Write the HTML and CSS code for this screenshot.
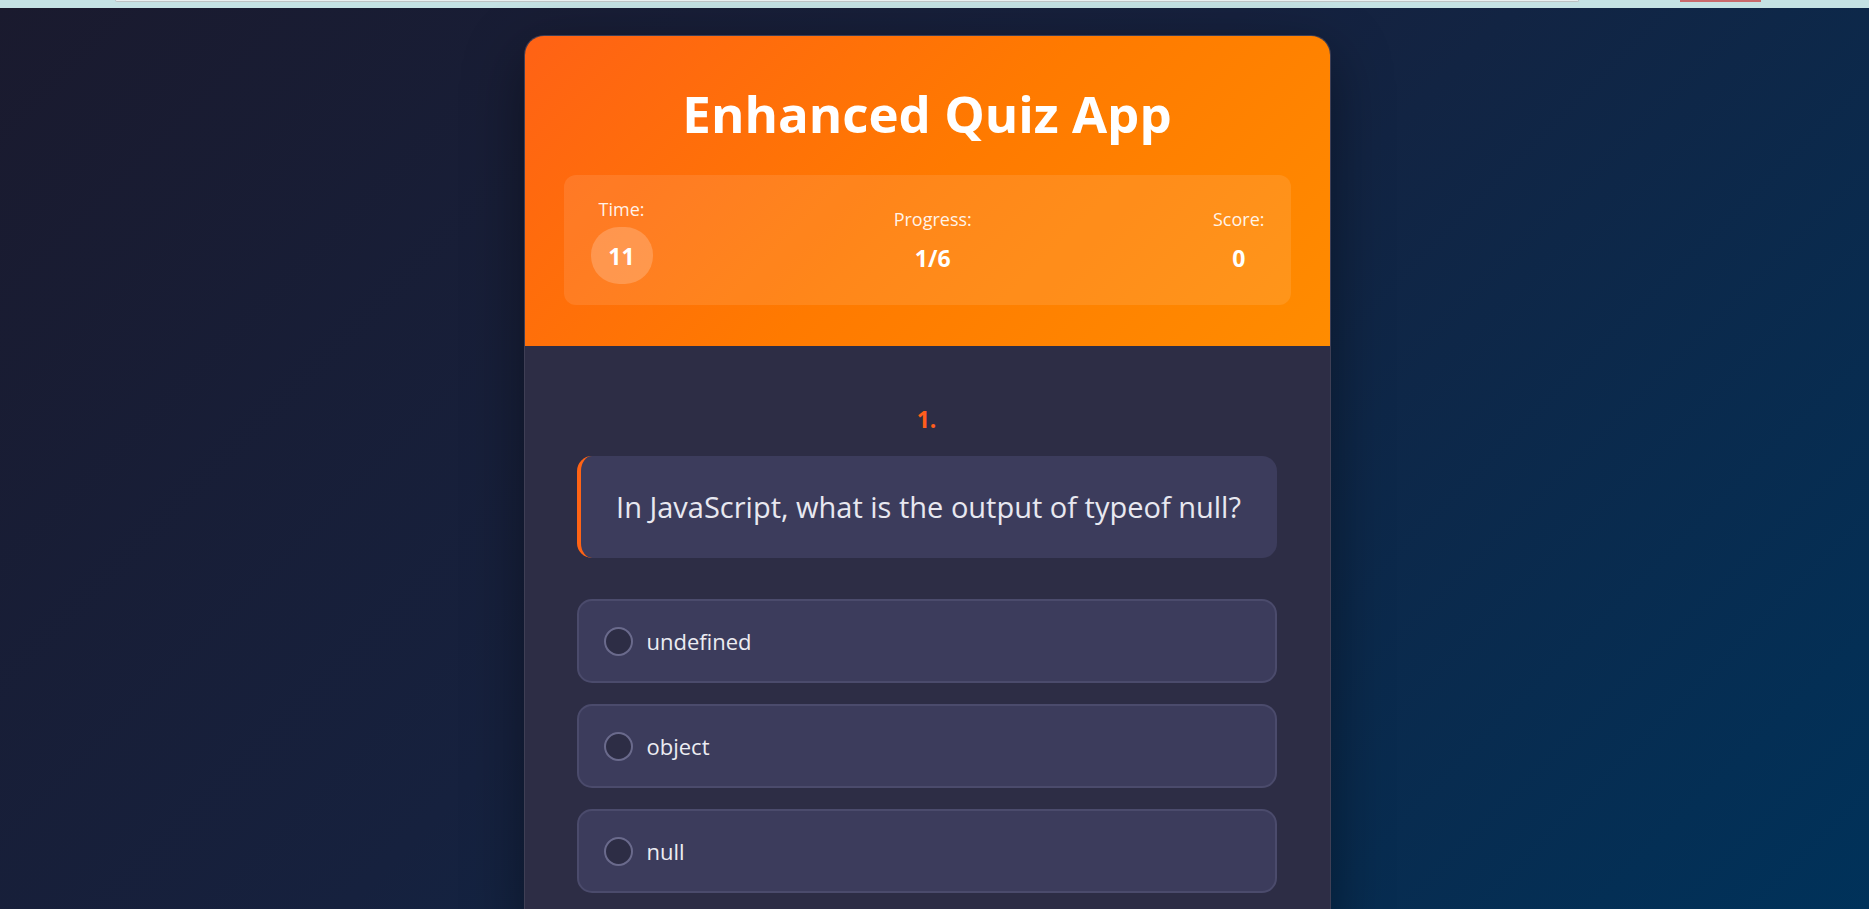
FILE: index.html
```html
<!DOCTYPE html>
<html lang="en">
<head>
<meta charset="utf-8">
<title>Enhanced Quiz App</title>
<link rel="stylesheet" href="styles.css">
</head>
<body>
<div class="topbar">
  <div class="topbar-field"></div>
  <div class="topbar-btn"></div>
</div>
<main class="page">
  <section class="quiz-card">
    <header class="quiz-header">
      <h1 class="quiz-title">Enhanced Quiz App</h1>
      <div class="stats">
        <div class="stat stat-time">
          <span class="stat-label">Time:</span>
          <span class="timer">11</span>
        </div>
        <div class="stat">
          <span class="stat-label">Progress:</span>
          <span class="stat-value">1/6</span>
        </div>
        <div class="stat">
          <span class="stat-label">Score:</span>
          <span class="stat-value">0</span>
        </div>
      </div>
    </header>
    <div class="quiz-body">
      <div class="q-number">1.</div>
      <div class="q-text">In JavaScript, what is the output of typeof null?</div>
      <ul class="options">
        <li class="option"><span class="radio"></span><span class="option-label">undefined</span></li>
        <li class="option"><span class="radio"></span><span class="option-label">object</span></li>
        <li class="option"><span class="radio"></span><span class="option-label">null</span></li>
      </ul>
    </div>
  </section>
</main>
</body>
</html>
```
FILE: styles.css
```css
html, body {
  height: 100%;
}
body {
  margin: 0;
  overflow: hidden;
  font-family: "Open Sans", "Noto Sans", "Liberation Sans", sans-serif;
  background: linear-gradient(135deg, #1a1a2e 0%, #16213e 45%, #00325a 100%);
  color: #fff;
}
.topbar {
  height: 8px;
  background: #c4e2e4;
  display: flex;
  align-items: flex-start;
  padding: 0 108px 0 115px;
  gap: 101px;
}
.topbar-field {
  flex: 1;
  height: 1px;
  background: #e9eff0;
  border: 1px solid #bdc3c4;
  border-top: none;
  border-radius: 0 0 4px 4px;
}
.topbar-btn {
  width: 81px;
  height: 2px;
  background: #c96a6c;
}
.page {
  padding: 27px 15px 0 0;
}
.quiz-card {
  width: 807px;
  box-sizing: border-box;
  margin: 0 auto;
  background: #2d2d45;
  border: 1px solid rgba(255, 255, 255, 0.09);
  border-radius: 20px;
  overflow: hidden;
  box-shadow: 0 18px 60px rgba(0, 0, 0, 0.4);
}
.quiz-header {
  background: linear-gradient(135deg, #ff6215 0%, #ff7a00 50%, #ff8c00 100%);
  padding: 45px 39px 41px;
}
.quiz-title {
  margin: 0 0 30px;
  text-align: center;
  font-size: 51px;
  line-height: 64px;
  font-weight: 700;
}
.stats {
  display: flex;
  justify-content: space-between;
  align-items: center;
  padding: 21px 26px 21px 27px;
  background: rgba(255, 255, 255, 0.1);
  border-radius: 12px;
}
.stat {
  display: flex;
  flex-direction: column;
  align-items: center;
}
.stat-label {
  font-size: 18px;
  line-height: 26px;
  color: rgba(255, 255, 255, 0.92);
  margin-bottom: 10px;
}
.stat-time .stat-label {
  margin-bottom: 5px;
}
.stat-value {
  font-size: 23px;
  line-height: 32px;
  font-weight: 700;
}
.timer {
  width: 62px;
  height: 57px;
  border-radius: 28px;
  background: rgba(255, 255, 255, 0.2);
  display: flex;
  align-items: center;
  justify-content: center;
  font-size: 23px;
  font-weight: 700;
}
.quiz-body {
  padding: 58px 53px 40px 52px;
}
.q-number {
  text-align: center;
  color: #ff5e1c;
  font-size: 23px;
  line-height: 30px;
  font-weight: 700;
  margin-bottom: 22px;
}
.q-text {
  background: #3c3c5c;
  border-left: 4px solid #ff6315;
  border-radius: 15px;
  padding: 30px;
  font-size: 29px;
  line-height: 42px;
  color: #e8e8f0;
  text-align: center;
  margin-bottom: 41px;
}
.options {
  list-style: none;
  margin: 0;
  padding: 0;
  display: flex;
  flex-direction: column;
  gap: 21px;
}
.option {
  height: 84px;
  box-sizing: border-box;
  display: flex;
  align-items: center;
  gap: 14px;
  padding: 0 25px;
  background: #3c3c5c;
  border: 2px solid #4b4b6c;
  border-radius: 15px;
  font-size: 22px;
  color: #ececf2;
}
.radio {
  width: 29px;
  height: 29px;
  box-sizing: border-box;
  border-radius: 50%;
  border: 2px solid #6a6a8c;
  background: #2d2d45;
  flex-shrink: 0;
}
```
